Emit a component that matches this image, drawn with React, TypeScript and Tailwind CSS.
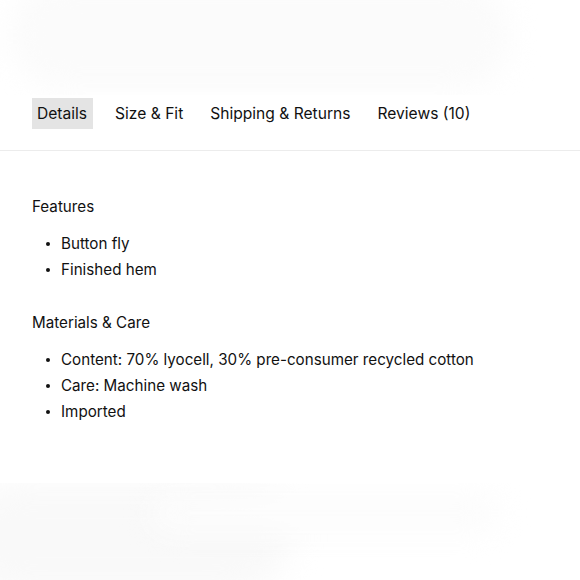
import React from 'react';

const TABS = ['Details', 'Size & Fit', 'Shipping & Returns', 'Reviews (10)'];

const SECTIONS: { title: string; items: string[] }[] = [
  { title: 'Features', items: ['Button fly', 'Finished hem'] },
  {
    title: 'Materials & Care',
    items: ['Content: 70% lyocell, 30% pre-consumer recycled cotton', 'Care: Machine wash', 'Imported'],
  },
];

export default function App() {
  return (
    <div className="w-[580px] h-[580px] overflow-hidden bg-white text-[#111] font-['Inter',sans-serif] text-[15.2px] flex flex-col">
      {/* faded image above */}
      <div className="h-[95px] bg-white relative overflow-hidden">
        <div className="absolute left-[10px] top-[-20px] w-[500px] h-[110px] rounded-[60px] bg-[#fbfbfb] blur-[14px]" />
      </div>

      {/* Tabs */}
      <div className="flex gap-[17px] px-8 pt-[3px] h-[56px] border-b border-[#ececec] items-start text-[15.6px]">
        {TABS.map((tab, i) => (
          <div
            key={tab}
            className={i === 0 ? 'pl-[5px] pr-[6px] h-[31px] flex items-center bg-[#e4e4e4]' : 'px-[5px] h-[31px] flex items-center'}
          >
            {tab}
          </div>
        ))}
      </div>

      {/* Details */}
      <div className="px-8 pt-[43px] flex flex-col gap-[27px]">
        {SECTIONS.map((s) => (
          <div key={s.title}>
            <div className="leading-[26px]">{s.title}</div>
            <ul className="mt-[11px]">
              {s.items.map((item) => (
                <li key={item} className="flex items-center leading-[26px]">
                  <span className="w-[29px] pl-[14px] flex">
                    <span className="w-[3.5px] h-[3.5px] rounded-full bg-[#111]" />
                  </span>
                  <span>{item}</span>
                </li>
              ))}
            </ul>
          </div>
        ))}
      </div>

      {/* faded image below */}
      <div className="mt-auto h-[97px] relative overflow-hidden">
        <div className="absolute left-[-40px] top-[0px] w-[330px] h-[110px] rounded-[80px] bg-[#f9f9f9] blur-[16px]" />
        <div className="absolute left-[150px] top-[10px] w-[350px] h-[40px] rounded-[40px] bg-[#fcfcfc] blur-[14px]" />
      </div>
    </div>
  );
}
